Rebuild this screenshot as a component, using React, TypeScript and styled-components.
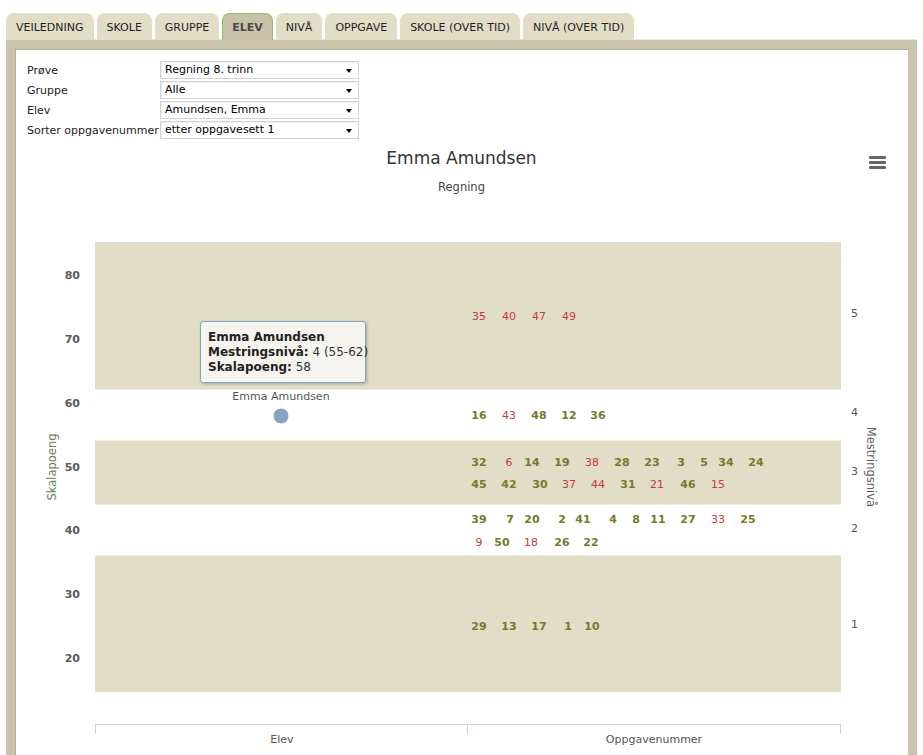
import { Fragment } from 'react';
import styled, { createGlobalStyle } from 'styled-components';

const GlobalStyle = createGlobalStyle`
  html, body {
    margin: 0;
    padding: 0;
    background: #ffffff;
    font-family: 'DejaVu Sans', Verdana, sans-serif;
    font-size: 11px;
    color: #222;
  }
`;

const tabs = ['VEILEDNING', 'SKOLE', 'GRUPPE', 'ELEV', 'NIVÅ', 'OPPGAVE', 'SKOLE (OVER TID)', 'NIVÅ (OVER TID)'];

const filters = [
  { label: 'Prøve', value: 'Regning 8. trinn' },
  { label: 'Gruppe', value: 'Alle' },
  { label: 'Elev', value: 'Amundsen, Emma' },
  { label: 'Sorter oppgavenummer', value: 'etter oppgavesett 1' },
];

// [oppgave, x, y, mestret] in page pixels
const points: [number, number, number, boolean][] = [
  [35, 479, 316, false], [40, 509, 316, false], [47, 539, 316, false], [49, 569, 316, false],
  [16, 479, 415, true], [43, 509, 415, false], [48, 539, 415, true], [12, 569, 415, true], [36, 598, 415, true],
  [32, 479, 462, true], [6, 509, 462, false], [14, 532, 462, true], [19, 562, 462, true], [38, 592, 462, false],
  [28, 622, 462, true], [23, 652, 462, true], [3, 681, 462, true], [5, 704, 462, true], [34, 726, 462, true],
  [24, 756, 462, true],
  [45, 479, 484, true], [42, 509, 484, true], [30, 540, 484, true], [37, 569, 484, false], [44, 598, 484, false],
  [31, 628, 484, true], [21, 657, 484, false], [46, 688, 484, true], [15, 718, 484, false],
  [39, 479, 519, true], [7, 510, 519, true], [20, 532, 519, true], [2, 562, 519, true], [41, 583, 519, true],
  [4, 613, 519, true], [8, 636, 519, true], [11, 658, 519, true], [27, 688, 519, true], [33, 718, 519, false],
  [25, 748, 519, true],
  [9, 479, 542, false], [50, 502, 542, true], [18, 531, 542, false], [26, 562, 542, true], [22, 591, 542, true],
  [29, 479, 626, true], [13, 509, 626, true], [17, 539, 626, true], [1, 568, 626, true], [10, 592, 626, true],
];

// svg origin on page
const OX = 15;
const OY = 199;

const bands = [
  { y1: 242, y2: 389, fill: true },
  { y1: 389, y2: 440, fill: false },
  { y1: 440, y2: 504, fill: true },
  { y1: 504, y2: 555, fill: false },
  { y1: 555, y2: 692, fill: true },
];

const yTicks = [
  [80, 275], [70, 339], [60, 403], [50, 467], [40, 530], [30, 594], [20, 658],
];

const levels = [
  [5, 313], [4, 412], [3, 471], [2, 528], [1, 624],
];

const S = {
  Tabs: styled.div`
    display: flex;
    gap: 3px;
    padding: 13px 0 0 6px;
    height: 27px;
  `,
  Tab: styled.div<{ $active?: boolean }>`
    display: flex;
    align-items: center;
    padding: 0 9px;
    height: 26px;
    border-radius: 8px 8px 0 0;
    background: ${({ $active }) => ($active ? '#c8c3a8' : '#e2ddc6')};
    border: 1px solid ${({ $active }) => ($active ? '#8fbf5f' : '#e2ddc6')};
    border-bottom: none;
    color: ${({ $active }) => ($active ? '#4a4a4a' : '#1e1e1e')};
    font-weight: ${({ $active }) => ($active ? 700 : 400)};
    font-size: 11px;
  `,
  Panel: styled.div`
    margin: 0 6px;
    border: 9px solid #c9c4aa;
    border-bottom: none;
    box-shadow: inset 1px 1px 0 #b4af92, 0 -1px 0 #ebe7d6;
    background: #fff;
    padding-top: 12px;
  `,
  Filters: styled.div`
    display: grid;
    grid-template-columns: 133px 199px;
    row-gap: 2px;
    padding-left: 12px;
    align-items: center;
  `,
  FilterLabel: styled.div`
    font-size: 11px;
    color: #222;
    white-space: nowrap;
  `,
  Select: styled.div`
    position: relative;
    height: 16px;
    border: 1px solid #d3d3d3;
    box-shadow: inset 1px 1px 0 #f0f0f0;
    padding-left: 4px;
    font-size: 11px;
    line-height: 16px;
    color: #000;
  `,
  Arrow: styled.span`
    position: absolute;
    right: 6px;
    top: 7px;
    width: 0;
    height: 0;
    border-left: 3.5px solid transparent;
    border-right: 3.5px solid transparent;
    border-top: 4px solid #000;
  `,
  Chart: styled.div`
    position: relative;
    margin-top: 2px;
    font-family: 'DejaVu Sans', 'Lucida Grande', sans-serif;
  `,
  Title: styled.div`
    height: 34px;
    line-height: 34px;
    text-align: center;
    font-size: 17px;
    color: #333;
  `,
  Subtitle: styled.div`
    height: 24px;
    line-height: 24px;
    text-align: center;
    font-size: 11.5px;
    color: #444;
  `,
  Menu: styled.div`
    position: absolute;
    top: 15px;
    right: 22px;
    display: flex;
    flex-direction: column;
    gap: 2px;
  `,
  MenuBar: styled.span`
    width: 17px;
    height: 3px;
    border-radius: 1px;
    background: #666;
  `,
  Plot: styled.svg`
    display: block;
  `,
  AxisNum: styled.text`
    font-size: 11px;
    font-weight: 700;
    fill: #5a5a5a;
  `,
  LevelNum: styled.text`
    font-size: 11px;
    fill: #555;
  `,
  AxisTitle: styled.text<{ $tint?: string }>`
    font-size: 11.5px;
    fill: ${({ $tint }) => $tint ?? '#5e5e5e'};
  `,
  DataLabel: styled.text<{ $ok: boolean }>`
    font-size: 11px;
    font-weight: ${({ $ok }) => ($ok ? 700 : 400)};
    fill: ${({ $ok }) => ($ok ? '#767a2c' : '#c93a3a')};
  `,
  PointLabel: styled.text`
    font-size: 11px;
    fill: #555;
  `,
  Tooltip: styled.div`
    position: absolute;
    left: 185px;
    top: 180px;
    width: 150px;
    padding: 8px 7px 7px 7px;
    background: rgba(247, 245, 240, 0.96);
    border: 1px solid #7fa3c6;
    border-radius: 3px;
    box-shadow: 1px 1px 3px rgba(0, 0, 0, 0.25);
    font-size: 12px;
    line-height: 15px;
    color: #333;
    white-space: nowrap;
  `,
  Strong: styled.b`
    color: #222;
  `,
};

export default function App() {
  const py = (y: number) => y - OY;
  const px = (x: number) => x - OX;

  return (
    <>
      <GlobalStyle />
      <S.Tabs>
        {tabs.map((t) => (
          <S.Tab key={t} $active={t === 'ELEV'}>
            {t}
          </S.Tab>
        ))}
      </S.Tabs>
      <S.Panel>
        <S.Filters>
          {filters.map((f) => (
            <Fragment key={f.label}>
              <S.FilterLabel>{f.label}</S.FilterLabel>
              <S.Select>
                {f.value}
                <S.Arrow />
              </S.Select>
            </Fragment>
          ))}
        </S.Filters>

        <S.Chart>
          <S.Title>Emma Amundsen</S.Title>
          <S.Subtitle>Regning</S.Subtitle>
          <S.Menu>
            <S.MenuBar />
            <S.MenuBar />
            <S.MenuBar />
          </S.Menu>

          <S.Plot width={893} height={560}>
            {bands.map((b) => (
              <rect
                key={b.y1}
                x={px(95)}
                y={py(b.y1)}
                width={746}
                height={b.y2 - b.y1}
                fill={b.fill ? '#e1ddc6' : '#ffffff'}
              />
            ))}
            {bands.slice(1).map((b) => (
              <line key={'l' + b.y1} x1={px(95)} x2={px(841)} y1={py(b.y1) + 0.5} y2={py(b.y1) + 0.5} stroke="#efece0" />
            ))}

            {yTicks.map(([v, y]) => (
              <S.AxisNum key={v} x={px(80)} y={py(y)} textAnchor="end" dominantBaseline="central">
                {v}
              </S.AxisNum>
            ))}
            <S.AxisTitle
              $tint="#6f7c5a"
              x={px(52)}
              y={py(467)}
              textAnchor="middle"
              dominantBaseline="central"
              transform={`rotate(-90 ${px(52)} ${py(467)})`}
            >
              Skalapoeng
            </S.AxisTitle>

            {levels.map(([v, y]) => (
              <S.LevelNum key={v} x={px(851)} y={py(y)} dominantBaseline="central">
                {v}
              </S.LevelNum>
            ))}
            <S.AxisTitle
              x={px(871)}
              y={py(467)}
              textAnchor="middle"
              dominantBaseline="central"
              transform={`rotate(90 ${px(871)} ${py(467)})`}
            >
              Mestringsnivå
            </S.AxisTitle>

            {points.map(([n, x, y, ok]) => (
              <S.DataLabel key={n} $ok={ok} x={px(x)} y={py(y)} textAnchor="middle" dominantBaseline="central">
                {n}
              </S.DataLabel>
            ))}

            <S.PointLabel x={px(281)} y={py(396)} textAnchor="middle" dominantBaseline="central">
              Emma Amundsen
            </S.PointLabel>
            <circle cx={px(281)} cy={py(416)} r={8} fill="#88a4c2" stroke="#ffffff" strokeWidth={1} />

            <g stroke="#c3d3e3" strokeWidth={1}>
              <line x1={px(95)} x2={px(841)} y1={py(724) + 0.5} y2={py(724) + 0.5} />
              <line x1={px(95) + 0.5} x2={px(95) + 0.5} y1={py(724)} y2={py(734)} />
              <line x1={px(467) + 0.5} x2={px(467) + 0.5} y1={py(724)} y2={py(734)} />
              <line x1={px(841) - 0.5} x2={px(841) - 0.5} y1={py(724)} y2={py(734)} />
            </g>
            <S.PointLabel x={px(282)} y={py(739)} textAnchor="middle" dominantBaseline="central">
              Elev
            </S.PointLabel>
            <S.PointLabel x={px(654)} y={py(739)} textAnchor="middle" dominantBaseline="central">
              Oppgavenummer
            </S.PointLabel>
          </S.Plot>

          <S.Tooltip>
            <S.Strong>Emma Amundsen</S.Strong>
            <br />
            <S.Strong>Mestringsnivå:</S.Strong> 4 (55-62)
            <br />
            <S.Strong>Skalapoeng:</S.Strong> 58
          </S.Tooltip>
        </S.Chart>
      </S.Panel>
    </>
  );
}
